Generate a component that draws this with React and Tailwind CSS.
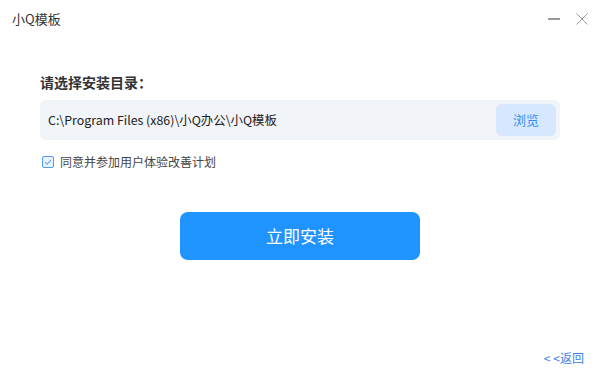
import { useState } from 'react';

function App() {
  const [agree, setAgree] = useState(true);

  return (
    <div
      className="w-[600px] h-[380px] bg-white flex flex-col text-[#333]"
      style={{ fontFamily: '"Microsoft YaHei", "Noto Sans CJK SC", sans-serif' }}
    >
      {/* title bar */}
      <div className="h-[38px] flex items-center pl-3 pr-3 shrink-0">
        <span className="text-[13px] text-[#333]">小Q模板</span>
        <div className="ml-auto flex items-center gap-4">
          <div className="w-3 h-[2px] bg-[#999]" />
          <svg width="12" height="12" viewBox="0 0 12 12">
            <path d="M0.5 0.5 L11.5 11.5 M11.5 0.5 L0.5 11.5" stroke="#999" strokeWidth="1" />
          </svg>
        </div>
      </div>

      <div className="flex-1 flex flex-col px-10">
        <div className="mt-[34px] text-[14px] font-bold text-[#333] leading-5">请选择安装目录：</div>

        <div className="mt-[8px] h-10 w-[520px] bg-[#f1f4f8] rounded-md flex items-center pl-2 pr-1">
          <span className="text-[12.4px] text-[#222]">C:\Program Files (x86)\小Q办公\小Q模板</span>
          <button className="ml-auto w-[60px] h-8 rounded-md bg-[#d5e8ff] text-[13px] text-[#3b8ef0]">浏览</button>
        </div>

        <label className="mt-[13px] flex items-center gap-[6px] cursor-pointer pl-[2px]">
          <span
            onClick={() => setAgree(!agree)}
            className="w-3 h-3 rounded-[2px] border border-[#4d9bf5] bg-[#eaf3ff] flex items-center justify-center"
          >
            {agree && (
              <svg width="8" height="8" viewBox="0 0 8 8">
                <path d="M1 4.2 L3.1 6.2 L7 1.8" stroke="#6aa8f0" strokeWidth="1.1" fill="none" />
              </svg>
            )}
          </span>
          <span className="text-[12px] text-[#444]">同意并参加用户体验改善计划</span>
        </label>

        <div className="mt-[41px] flex justify-center">
          <button className="w-[240px] h-12 rounded-lg bg-[#1f93ff] text-white text-[17px]">立即安装</button>
        </div>

        <div className="mt-auto mb-[13px] self-end -mr-6 text-[12px] text-[#3b82e6] flex items-center">
          <span className="mr-[3px]">&lt;</span>
          <span>&lt;</span>
          <span>返回</span>
        </div>
      </div>
    </div>
  );
}

export default App;
